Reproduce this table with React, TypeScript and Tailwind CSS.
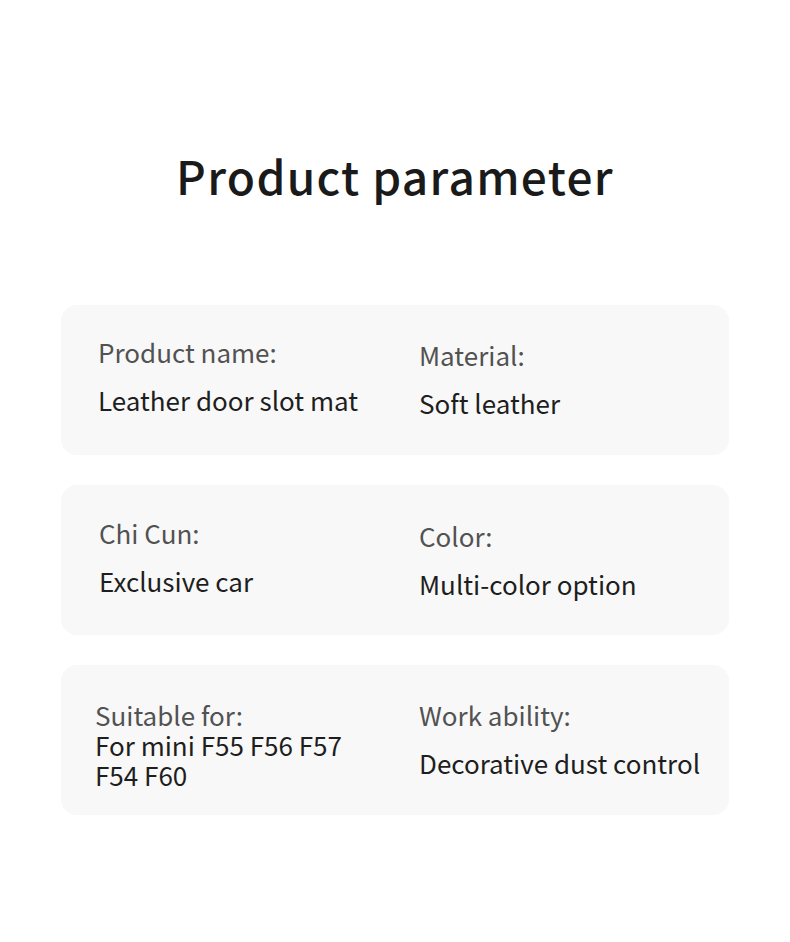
import React from 'react';

type CellData = { label: string; value: string[]; pad: string };

const ROWS: { left: CellData; right: CellData }[] = [
  {
    left: { label: 'Product name:', value: ['Leather door slot mat'], pad: 'pt-[32px] pl-[37px]' },
    right: { label: 'Material:', value: ['Soft leather'], pad: 'pt-[35px]' },
  },
  {
    left: { label: 'Chi Cun:', value: ['Exclusive car'], pad: 'pt-[33px] pl-[38px]' },
    right: { label: 'Color:', value: ['Multi-color option'], pad: 'pt-[36px]' },
  },
  {
    left: { label: 'Suitable for:', value: ['For mini F55 F56 F57', 'F54 F60'], pad: 'pt-[35px] pl-[34px]' },
    right: { label: 'Work ability:', value: ['Decorative dust control'], pad: 'pt-[35px]' },
  },
];

const Cell = ({ label, value, pad }: CellData) => {
  const tight = value.length > 1;
  return (
    <div className={`${pad} flex flex-col whitespace-nowrap`}>
      <div className="text-[26px] leading-[30px] text-[#525252]">{label}</div>
      <div className={`${tight ? 'mt-0' : 'mt-[18px]'} text-[26px] leading-[30px] text-[#1e1e1e]`}>
        {value.map((v) => (
          <div key={v}>{v}</div>
        ))}
      </div>
    </div>
  );
};

export default function App() {
  return (
    <div className="w-[790px] h-[942px] bg-white flex flex-col items-center font-['Noto_Sans_CJK_SC','Noto_Sans',sans-serif]">
      <h1 className="mt-[145px] text-[46px] leading-[60px] font-medium text-[#1a1a1a] tracking-[1.3px]">
        Product parameter
      </h1>

      <div className="mt-[100px] w-[668px] flex flex-col gap-[30px]">
        {ROWS.map((row, i) => (
          <div key={i} className="h-[150px] rounded-[16px] bg-[#f8f8f8] grid grid-cols-[358px_1fr] items-start">
            <Cell {...row.left} />
            <Cell {...row.right} />
          </div>
        ))}
      </div>
    </div>
  );
}
